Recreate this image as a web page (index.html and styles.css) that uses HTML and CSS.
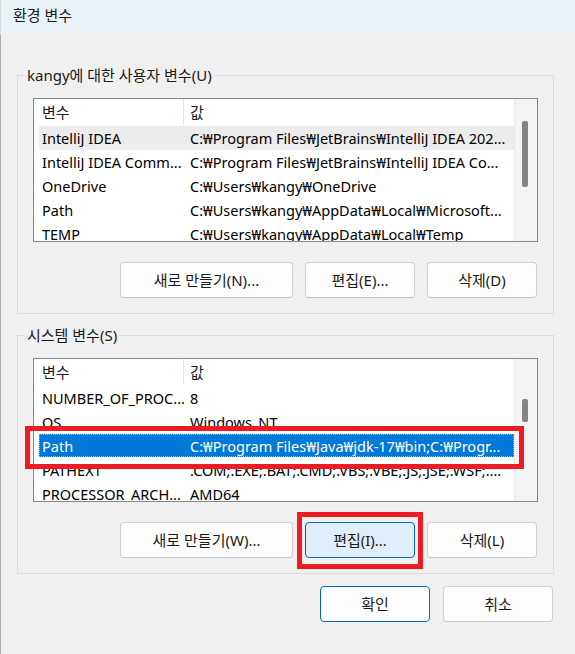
FILE: index.html
```html
<!DOCTYPE html>
<html lang="ko">
<head>
<meta charset="utf-8">
<title>환경 변수</title>
<link rel="stylesheet" href="styles.css">
</head>
<body>
<div class="window">
  <div class="titlebar">환경 변수</div>
  <div class="content">
    <fieldset class="group">
      <legend>kangy에 대한 사용자 변수(U)</legend>
      <div class="group-body">
        <div class="list-wrap">
          <div class="list">
            <div class="list-main">
              <div class="header"><div class="c1">변수</div><div class="c2">값</div></div>
              <div class="row hover"><div class="c1">IntelliJ IDEA</div><div class="c2">C:₩Program Files₩JetBrains₩IntelliJ IDEA 202...</div></div>
              <div class="row"><div class="c1">IntelliJ IDEA Comm...</div><div class="c2">C:₩Program Files₩JetBrains₩IntelliJ IDEA Co...</div></div>
              <div class="row"><div class="c1">OneDrive</div><div class="c2">C:₩Users₩kangy₩OneDrive</div></div>
              <div class="row"><div class="c1">Path</div><div class="c2">C:₩Users₩kangy₩AppData₩Local₩Microsoft...</div></div>
              <div class="row"><div class="c1">TEMP</div><div class="c2">C:₩Users₩kangy₩AppData₩Local₩Temp</div></div>
            </div>
            <div class="scrollbar"><div class="thumb thumb-user"></div></div>
          </div>
        </div>
        <div class="buttons">
          <button class="btn wide">새로 만들기(N)...</button>
          <button class="btn">편집(E)...</button>
          <button class="btn">삭제(D)</button>
        </div>
      </div>
    </fieldset>

    <fieldset class="group group-system">
      <legend>시스템 변수(S)</legend>
      <div class="group-body">
        <div class="list-wrap">
          <div class="list">
            <div class="list-main">
              <div class="header"><div class="c1">변수</div><div class="c2">값</div></div>
              <div class="row"><div class="c1">NUMBER_OF_PROC...</div><div class="c2">8</div></div>
              <div class="row"><div class="c1">OS</div><div class="c2">Windows_NT</div></div>
              <div class="row selected"><div class="c1">Path</div><div class="c2">C:₩Program Files₩Java₩jdk-17₩bin;C:₩Progr...</div></div>
              <div class="row"><div class="c1">PATHEXT</div><div class="c2">.COM;.EXE;.BAT;.CMD;.VBS;.VBE;.JS;.JSE;.WSF;....</div></div>
              <div class="row"><div class="c1">PROCESSOR_ARCH...</div><div class="c2">AMD64</div></div>
            </div>
            <div class="scrollbar"><div class="thumb thumb-system"></div></div>
          </div>
          <span class="mark mark-row"></span>
        </div>
        <div class="buttons">
          <button class="btn wide">새로 만들기(W)...</button>
          <span class="btn-holder">
            <button class="btn focused">편집(I)...</button>
            <span class="mark mark-btn"></span>
          </span>
          <button class="btn">삭제(L)</button>
        </div>
      </div>
    </fieldset>

    <div class="dialog-buttons">
      <button class="btn default">확인</button>
      <button class="btn">취소</button>
    </div>
  </div>
</div>
</body>
</html>
```

FILE: styles.css
```css
* { box-sizing: border-box; }

html, body {
  margin: 0;
  padding: 0;
  background: #f0f0f0;
}

body {
  font-family: "Noto Sans", "Noto Sans CJK KR", sans-serif;
  font-size: 15px;
  color: #000;
  width: 575px;
  height: 654px;
  overflow: hidden;
}

.window {
  height: 654px;
  display: flex;
  flex-direction: column;
}

.titlebar {
  height: 35px;
  background: #eaf2f8;
  padding: 4px 0 0 12px;
  line-height: 22px;
  font-size: 15px;
  color: #1a1a1a;
  border-left: 1px solid #d6dadd;
}

.content {
  flex: 1;
  padding: 30px 0 0 16px;
  border-left: 1px solid #a8a8a8;
}

.group {
  width: 537px;
  margin: 0 0 11px 0;
  padding: 13px 0 15px 0;
  border: 1px solid #dcdcdc;
  min-width: 0;
}

.group legend {
  padding: 0 2px;
  margin-left: 7px;
  line-height: 20px;
  color: #1a1a1a;
}

.group-body {
  padding: 0 15px;
}

.list-wrap {
  position: relative;
}

.list {
  width: 505px;
  height: 144px;
  border: 1px solid #828790;
  background: #fff;
  display: flex;
  overflow: hidden;
}

.list-main {
  flex: 1;
  min-width: 0;
  overflow: hidden;
}

.header {
  display: flex;
  height: 27px;
  line-height: 27px;
  color: #1a1a1a;
}

.header .c1 {
  border-right: 1px solid #e5e5e5;
  margin: 0 0 2px 0;
}

.c1 {
  width: 150px;
  flex: none;
  padding-left: 8px;
  white-space: nowrap;
  overflow: hidden;
}

.c2 {
  flex: 1;
  min-width: 0;
  padding-left: 6px;
  white-space: nowrap;
  overflow: hidden;
}

.row {
  display: flex;
  height: 24px;
  line-height: 24px;
  margin-left: 5px;
  font-size: 14.5px;
}

.row .c1 {
  width: 145px;
  padding-left: 3px;
}

.row.hover {
  background: #ececec;
}

.row.selected {
  background: #0078d7;
  color: #fff;
  outline: 1px dotted #8dbbe6;
  outline-offset: -1px;
  height: 23px;
  margin-bottom: 1px;
}

.scrollbar {
  width: 23px;
  flex: none;
  background: #f4f4f4;
  border-left: 1px solid #e8e8e8;
  position: relative;
}

.thumb {
  position: absolute;
  left: 7px;
  width: 6px;
  background: #858585;
  border-radius: 2px;
}

.thumb-user {
  top: 22px;
  height: 66px;
}

.thumb-system {
  top: 40px;
  height: 23px;
}

.buttons {
  display: flex;
  justify-content: flex-end;
  gap: 12px;
  margin-top: 20px;
  margin-right: 1px;
}

.btn {
  font: inherit;
  font-size: 15px;
  color: #1a1a1a;
  width: 110px;
  height: 36px;
  padding: 0;
  background: #fdfdfd;
  border: 1px solid #d0d0d0;
  border-bottom-color: #c4c4c4;
  border-radius: 4px;
  line-height: 34px;
}

.btn.wide {
  width: 173px;
}

.btn.focused {
  background: #e0eef9;
  border-color: #0067c0;
}

.btn.default {
  border-color: #0067c0;
}

.btn-holder {
  position: relative;
  display: flex;
}

.mark {
  position: absolute;
  border: 5px solid #ed1c24;
  pointer-events: none;
}

.mark-row {
  left: -8px;
  top: 68px;
  width: 499px;
  height: 43px;
}

.mark-btn {
  left: -8px;
  right: -8px;
  top: -10px;
  bottom: -11px;
}

.dialog-buttons {
  display: flex;
  justify-content: flex-end;
  gap: 13px;
  width: 536px;
  margin-top: 12px;
}
```
